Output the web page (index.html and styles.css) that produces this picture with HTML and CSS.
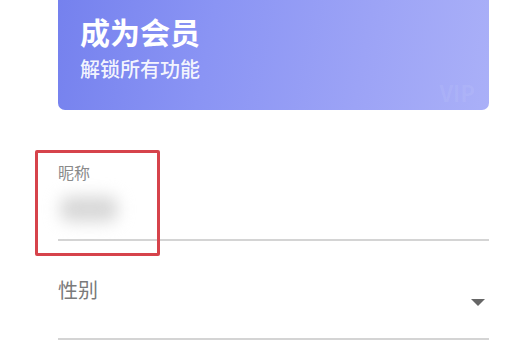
FILE: index.html
```html
<!DOCTYPE html>
<html>
<head>
  <meta charset="utf-8">
  <link rel="stylesheet" href="styles.css">
</head>
<body>
  <div class="page">
    <!-- Member banner -->
    <div class="vip-banner">
      <h2 class="vip-title">成为会员</h2>
      <p class="vip-subtitle">解锁所有功能</p>
      <span class="vip-mark">VIP</span>
    </div>

    <!-- Nickname -->
    <div class="field field-nick">
      <label class="field-label">昵称</label>
      <div class="field-value"><span class="blurred"></span></div>
    </div>

    <!-- Gender -->
    <div class="field field-select">
      <span class="select-label">性别</span>
      <span class="select-arrow"></span>
    </div>

    <!-- Highlight annotation -->
    <div class="highlight"></div>
  </div>
</body>
</html>
```

FILE: styles.css
```css
* {
  margin: 0;
  padding: 0;
  box-sizing: border-box;
}

body {
  background: #fff;
  font-family: "Noto Sans CJK SC", "Noto Sans", sans-serif;
}

.page {
  position: relative;
  width: 529px;
  height: 356px;
  padding: 0 40px 0 58px;
  overflow: hidden;
}

.vip-banner {
  position: relative;
  height: 110px;
  padding: 11px 22px;
  border-radius: 0 0 7px 7px;
  background: linear-gradient(100deg, #7581ee 0%, #8a94f4 35%, #9ca3f6 70%, #aab0f8 100%);
  color: #fff;
}

.vip-title {
  font-size: 30px;
  font-weight: 700;
  line-height: 40px;
}

.vip-subtitle {
  margin-top: 4px;
  font-size: 20px;
  font-weight: 500;
  line-height: 28px;
  color: rgba(255, 255, 255, 0.93);
}

.vip-mark {
  position: absolute;
  right: 14px;
  bottom: 6px;
  font-size: 22px;
  line-height: 24px;
  font-weight: bold;
  color: rgba(255, 255, 255, 0.07);
}

.field {
  border-bottom: 2px solid #d4d4d4;
}

.field-nick {
  margin-top: 52px;
  height: 79px;
}

.field-label {
  display: block;
  font-size: 16px;
  line-height: 20px;
  color: #8a8a8a;
}

.field-value {
  height: 50px;
  padding-top: 14px;
}

.blurred {
  display: block;
  width: 58px;
  height: 26px;
  margin-left: 2px;
  background: #d8d8d8;
  border-radius: 10px;
  filter: blur(8px);
}

.field-select {
  display: flex;
  justify-content: space-between;
  height: 99px;
  padding: 37px 4px 0 0;
}

.select-label {
  font-size: 20px;
  line-height: 24px;
  color: #7a7a7a;
}

.select-arrow {
  width: 0;
  height: 0;
  margin-top: 21px;
  border-left: 7px solid transparent;
  border-right: 7px solid transparent;
  border-top: 7px solid #666;
}

.highlight {
  position: absolute;
  left: 35px;
  top: 150px;
  width: 125px;
  height: 106px;
  border: 3px solid #d6434b;
  border-radius: 2px;
}
```
